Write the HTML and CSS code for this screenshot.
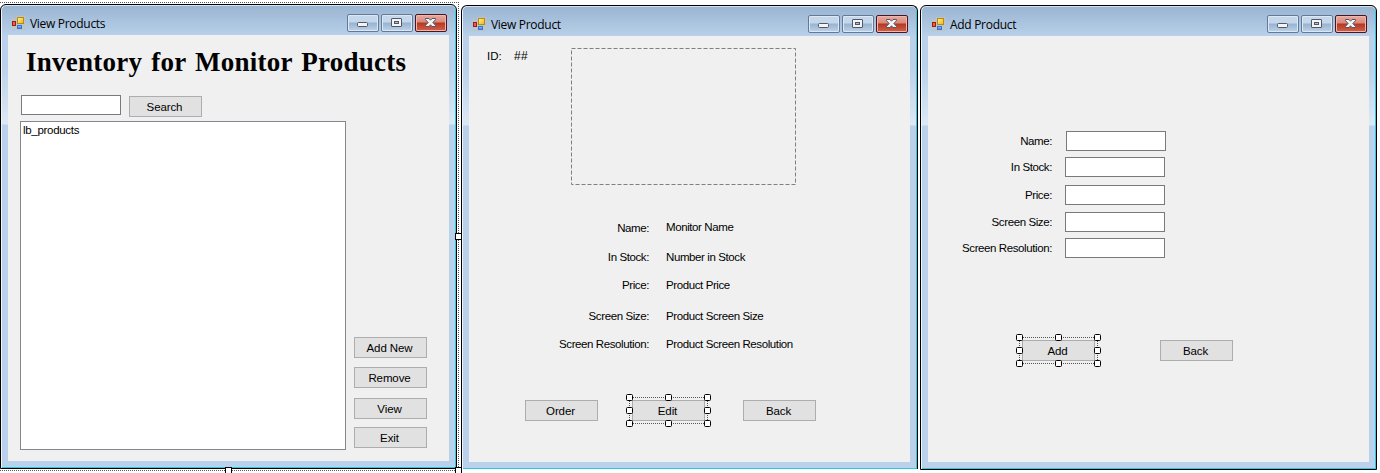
FILE: index.html
```html
<!DOCTYPE html>
<html lang="en">
<head>
<meta charset="utf-8">
<title>Monitor inventory forms</title>
<link rel="stylesheet" href="styles.css">
</head>
<body>
<svg class="defs" width="0" height="0" aria-hidden="true">
  <defs>
    <linearGradient id="gold" x1="0" y1="0" x2="1" y2="1"><stop offset="0" stop-color="#fff3a8"/><stop offset="1" stop-color="#eeb300"/></linearGradient>
    <linearGradient id="blue" x1="0" y1="0" x2="0" y2="1"><stop offset="0" stop-color="#a9cbff"/><stop offset="1" stop-color="#2f6fdc"/></linearGradient>
    <symbol id="form-icon" viewBox="0 0 14 14">
      <path d="M.5 1v12.500h12.500V.5H4.500M4.500.5v13M.5 3.500h4M.5 9.500h12.500" fill="none" stroke="#c4c2bc"/>
      <rect x="5.500" y="1.500" width="6" height="6" fill="url(#gold)" stroke="#b98a10"/>
      <rect x=".5" y="5.500" width="3" height="4" fill="#e8604a" stroke="#a01c0c"/>
      <rect x="5.500" y="9.500" width="4" height="3" fill="url(#blue)" stroke="#3b74d0"/>
    </symbol>
    <symbol id="min-icon" viewBox="1 1 30 16"><rect x="10.500" y="8.500" width="10" height="4" rx="1" fill="#f4f4f4" stroke="#535666"/></symbol>
    <symbol id="max-icon" viewBox="1 1 30 16"><rect x="10.500" y="4.500" width="10" height="8" rx=".5" fill="#f4f4f4" stroke="#535666"/><rect x="13.500" y="7.500" width="4" height="2" fill="#a9bfe0" stroke="#535666"/></symbol>
    <symbol id="close-icon" viewBox="1 1 30 16"><path d="M10.500 4.500h3.500l1.500 1.700 1.500-1.700h3.500v1.200l-2.700 2.800 2.700 2.800v1.200H17l-1.500-1.700-1.500 1.700h-3.500v-1.200l2.700-2.800-2.700-2.800z" fill="#f4f4f4" stroke="#535666"/></symbol>
  </defs>
</svg>
<main class="surface">
  <div class="form-outline"></div>
  <section class="window products">
    <header class="titlebar">
      <svg class="app-icon"><use href="#form-icon"/></svg><span class="caption">View Products</span>
      <div class="controls"><svg class="ctl"><use href="#min-icon"/></svg><svg class="ctl"><use href="#max-icon"/></svg><svg class="ctl close"><use href="#close-icon"/></svg></div>
    </header>
    <div class="client">
      <h1 class="heading">Inventory for Monitor Products</h1>
      <div class="search"><div class="box"></div><div class="btn">Search</div></div>
      <div class="body">
        <div class="list">lb_products</div>
        <div class="side"><div class="btn">Add New</div><div class="btn">Remove</div><div class="btn low">View</div><div class="btn">Exit</div></div>
      </div>
    </div>
  </section>
  <i class="form-handle right"></i><i class="form-handle bottom"></i><i class="form-handle corner"></i>

  <section class="window detail">
    <header class="titlebar">
      <svg class="app-icon"><use href="#form-icon"/></svg><span class="caption">View Product</span>
      <div class="controls"><svg class="ctl"><use href="#min-icon"/></svg><svg class="ctl"><use href="#max-icon"/></svg><svg class="ctl close"><use href="#close-icon"/></svg></div>
    </header>
    <div class="client">
      <div class="top"><span class="id">ID:</span><span class="num">##</span><svg class="picture"><rect x=".5" y=".5" width="224" height="136"/></svg></div>
      <div class="facts">
        <span class="label">Name:</span><span class="value first">Monitor Name</span>
        <span class="label">In Stock:</span><span class="value">Number in Stock</span>
        <span class="label">Price:</span><span class="value">Product Price</span>
        <span class="label">Screen Size:</span><span class="value">Product Screen Size</span>
        <span class="label">Screen Resolution:</span><span class="value">Product Screen Resolution</span>
      </div>
      <div class="actions">
        <div class="btn">Order</div>
        <div class="btn selected">Edit<svg class="grips" viewBox="0 0 85 33"><path class="dots" d="M3 3.500h79M3 29.500h79M3.500 3v27M81.500 3v27"/><g class="knobs"><rect x=".5" y=".5" width="6" height="6" rx="1"/><rect x="39.500" y=".5" width="6" height="6" rx="1"/><rect x="78.500" y=".5" width="6" height="6" rx="1"/><rect x=".5" y="13.500" width="6" height="6" rx="1"/><rect x="78.500" y="13.500" width="6" height="6" rx="1"/><rect x=".5" y="26.500" width="6" height="6" rx="1"/><rect x="39.500" y="26.500" width="6" height="6" rx="1"/><rect x="78.500" y="26.500" width="6" height="6" rx="1"/></g></svg></div>
        <div class="btn">Back</div>
      </div>
    </div>
  </section>

  <section class="window add">
    <header class="titlebar">
      <svg class="app-icon"><use href="#form-icon"/></svg><span class="caption">Add Product</span>
      <div class="controls"><svg class="ctl"><use href="#min-icon"/></svg><svg class="ctl"><use href="#max-icon"/></svg><svg class="ctl close"><use href="#close-icon"/></svg></div>
    </header>
    <div class="client">
      <div class="fields">
        <span class="label">Name:</span><div class="box first"></div>
        <span class="label">In Stock:</span><div class="box"></div>
        <span class="label">Price:</span><div class="box"></div>
        <span class="label">Screen Size:</span><div class="box"></div>
        <span class="label">Screen Resolution:</span><div class="box"></div>
      </div>
      <div class="actions">
        <div class="btn selected">Add<svg class="grips" viewBox="0 0 85 33"><path class="dots" d="M3 3.500h79M3 29.500h79M3.500 3v27M81.500 3v27"/><g class="knobs"><rect x=".5" y=".5" width="6" height="6" rx="1"/><rect x="39.500" y=".5" width="6" height="6" rx="1"/><rect x="78.500" y=".5" width="6" height="6" rx="1"/><rect x=".5" y="13.500" width="6" height="6" rx="1"/><rect x="78.500" y="13.500" width="6" height="6" rx="1"/><rect x=".5" y="26.500" width="6" height="6" rx="1"/><rect x="39.500" y="26.500" width="6" height="6" rx="1"/><rect x="78.500" y="26.500" width="6" height="6" rx="1"/></g></svg></div>
        <div class="btn">Back</div>
      </div>
    </div>
  </section>
</main>
</body>
</html>
```

FILE: styles.css
```css
* { box-sizing: border-box; }
body { margin: 0; background: #fff; overflow: hidden; }
.defs { position: absolute; }
.surface {
  position: relative; width: 1380px; height: 473px; overflow: hidden;
  font: 11.5px/14px "Liberation Sans", Arial, sans-serif; letter-spacing: -0.4px; color: #000;
}

/* Window frame */
.window {
  position: absolute; top: 5px; width: 457px; height: 465px;
  display: flex; flex-direction: column; padding: 0 7px 7px;
  border: 1px solid #000; border-radius: 6px 6px 0 0;
  background:
    linear-gradient(#99b4d1, #b9d1ea 31px, #b9d1ea 60px, #dce8f5 119px, #b9d1ea 120px);
  box-shadow: inset 1px 0 #eef4fb, inset 0 1px #d5e3f1, inset -1px -1px #2fc8de;
}
.products { left: 0; top: 4px; }
.detail { left: 461px; height: 464px; border-bottom: 0; }
.add { left: 920px; }
.titlebar { height: 30px; flex: none; display: flex; align-items: flex-start; padding: 0 2px 0 4px; }
.app-icon { width: 14px; height: 14px; margin-top: 11px; }
.caption { font: 12px/16px "Open Sans", "Noto Sans", sans-serif; letter-spacing: -0.3px; margin: 11px 0 0 4px; }
.controls { display: flex; gap: 2px; margin: 9px 0 0 auto; }
.ctl {
  width: 32px; height: 18px; border: 1px solid #647898; border-radius: 2px;
  background: linear-gradient(#c4d7eb 0 7px, #98b3d0 8px, #bcd3ea);
  box-shadow: inset 0 0 0 1px #dce8f4;
}
.close { border-color: #4c1420; background: linear-gradient(#e8aaa0, #d9897c 7px, #b43820 8px, #d2624b); box-shadow: inset 0 0 0 1px #efb6aa; }
.client { flex: 1; display: flex; flex-direction: column; background: #f0f0f0; }

/* Controls */
.btn {
  position: relative; width: 73px; height: 21px; flex: none;
  border: 1px solid #adadad; background: #e1e1e1;
  text-align: center; line-height: 20px; padding-right: 2px; letter-spacing: -0.1px;
}
.box { width: 100px; height: 20px; border: 1px solid #7a7a7a; background: #fff; }
.grips { position: absolute; left: -7px; top: -7px; width: 85px; height: 33px; }
.dots { fill: none; stroke: #555; stroke-dasharray: 1 1; }
.knobs { fill: #fff; stroke: #000; }

/* Product list form */
.heading {
  margin: 9px 0 0 18px; height: 37px; white-space: nowrap;
  font: bold 27px/37px "Liberation Serif", "Times New Roman", serif; letter-spacing: 0.25px; word-spacing: 2px;
}
.search { display: flex; gap: 8px; padding: 14px 0 0 13px; }
.search .btn { margin-top: 1px; }
.body { display: flex; gap: 8px; padding: 4px 0 0 12px; }
.list { width: 326px; height: 329px; border: 1px solid #828790; background: #fff; padding: 1px 2px; letter-spacing: -0.3px; }
.side { padding-top: 216px; display: flex; flex-direction: column; gap: 9px; }
.side .low { margin: 1px 0 -1px; }

/* Product detail form */
.top { display: flex; height: 149px; padding: 12px 0 0 18px; }
.id { width: 27px; padding-top: 1px; letter-spacing: 0; }
.num { width: 57px; padding-top: 1px; font-size: 12px; letter-spacing: 0.3px; }
.picture { width: 225px; height: 137px; }
.picture rect { fill: none; stroke: #808080; stroke-dasharray: 4 2; }
.facts {
  display: grid; grid-template-columns: 180px 1fr; column-gap: 17px;
  grid-template-rows: 29px 28px 31px 28px 14px; padding-top: 36px; white-space: nowrap;
}
.label { text-align: right; }
.value.first { margin-top: -1px; }
.detail .actions { display: flex; padding: 49px 0 0 56px; gap: 34px; }
.detail .selected { margin-right: 4px; }

/* Add form */
.fields {
  display: grid; grid-template-columns: 124px 100px; column-gap: 13px;
  grid-template-rows: 26px 28px 27px 26px 20px; padding-top: 95px; line-height: 20px;
}
.fields .first { margin-left: 1px; }
.add .actions { display: flex; gap: 65px; padding: 82px 0 0 94px; }

/* Designer selection */
.form-outline { position: absolute; left: -2px; top: 2px; width: 461px; height: 469px; border: 1px dotted #555; }
.form-handle { position: absolute; width: 7px; height: 7px; background: #fff; border: 1px solid #000; }
.right { left: 455px; top: 233px; }
.bottom { left: 225px; top: 467px; }
.corner { left: 455px; top: 467px; }
```
